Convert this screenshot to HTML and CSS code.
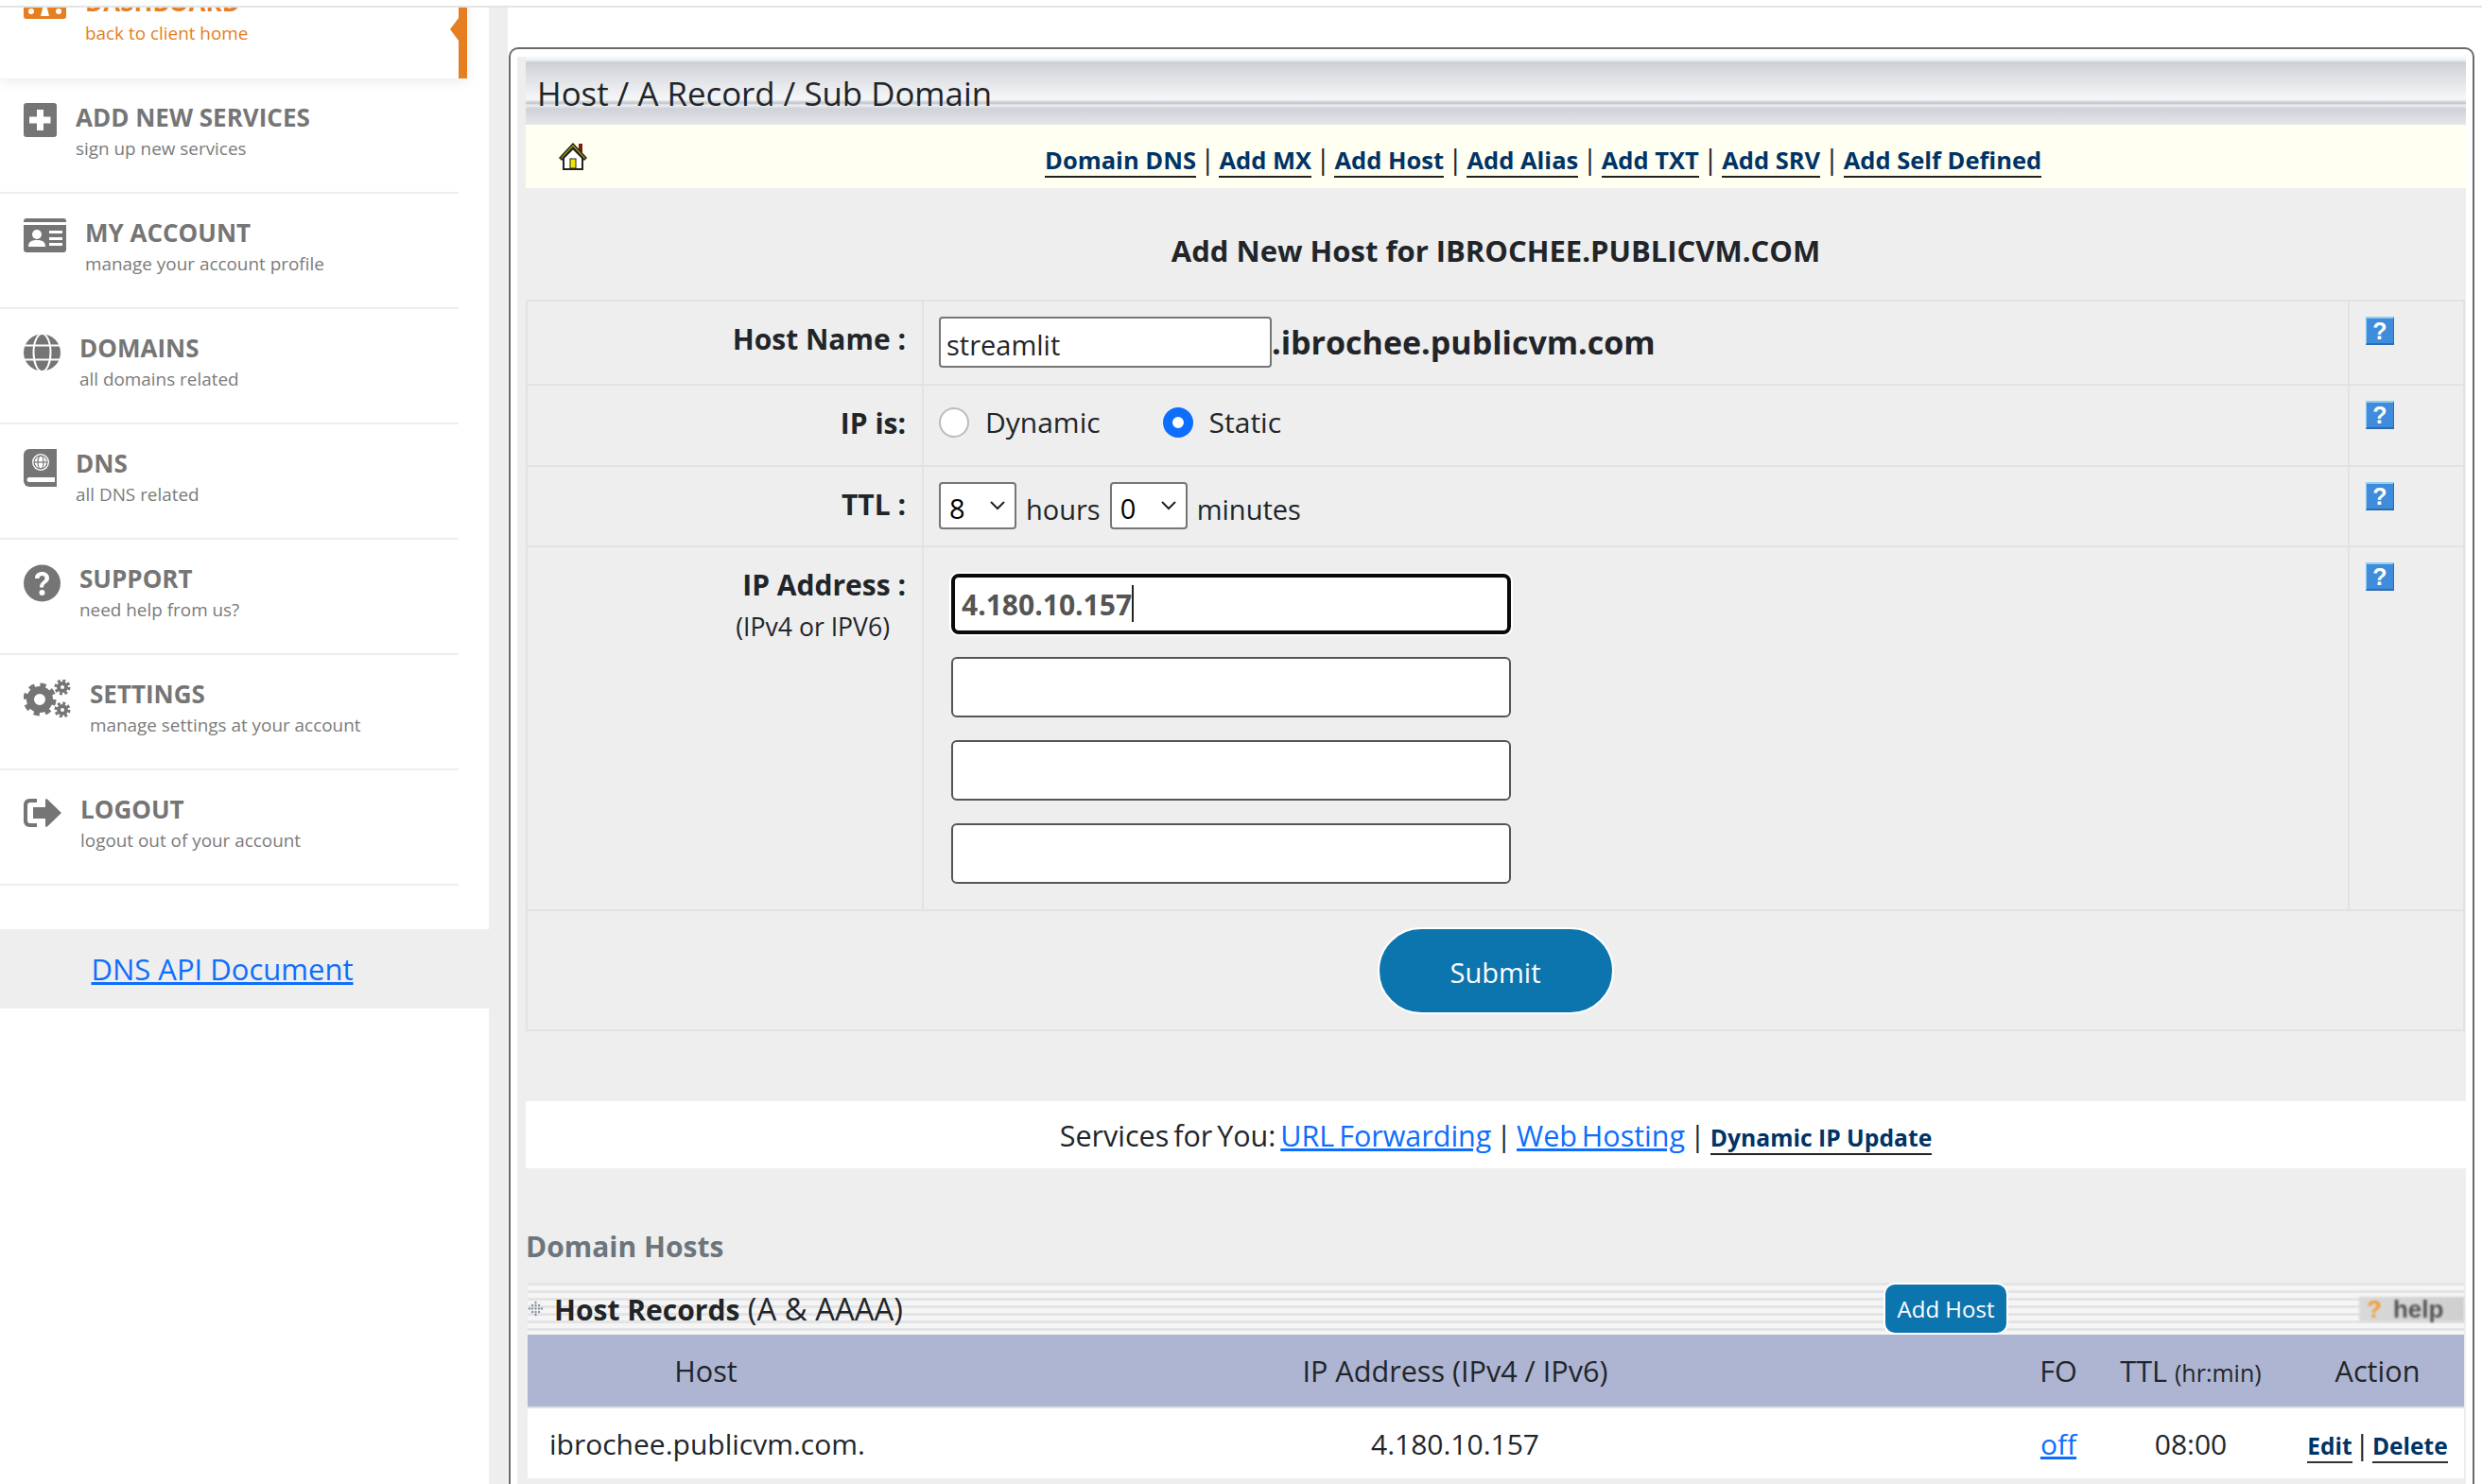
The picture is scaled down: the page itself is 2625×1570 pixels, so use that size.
FILE: index.html
```html
<!DOCTYPE html>
<html lang="en">
<head>
    <meta charset="UTF-8" />
    <meta name="viewport" content="width=device-width, initial-scale=1.0" />
    <title>Host / A Record / Sub Domain</title>
    <link rel="stylesheet" href="styles.css">
</head>
<body>

<div class="topline"></div>

<div class="layout">
    <!-- Sidebar -->
    <aside class="sidebar">
        <a class="side-item active" href="#">
            <svg class="side-icon" width="45" height="36" viewBox="0 0 45 36"><path d="M6 0h33a6 6 0 0 1 6 6v24a3 3 0 0 1-3 3H3a3 3 0 0 1-3-3V6a6 6 0 0 1 6-6z" fill="#e67e22"/><circle cx="8" cy="25" r="3" fill="#fff"/><circle cx="37" cy="25" r="3" fill="#fff"/><path d="M18 30l3-12h3l3 12z" fill="#fff"/></svg>
            <span class="side-text"><b>DASHBOARD</b><small>back to client home</small></span>
            <i class="notch"></i>
        </a>
        <a class="side-item" href="#">
            <svg class="side-icon" width="35" height="36" viewBox="0 0 35 36"><rect width="35" height="36" rx="3" fill="#757575"/><path d="M14 7h7v7.500h7.500v7H21V29h-7v-7.500H6v-7h8z" fill="#fff"/></svg>
            <span class="side-text"><b>ADD NEW SERVICES</b><small>sign up new services</small></span>
        </a>
        <a class="side-item" href="#">
            <svg class="side-icon" width="45" height="36" viewBox="0 0 45 36"><path d="M3 0h39a3 3 0 0 1 3 3v1H0V3a3 3 0 0 1 3-3z" fill="#757575"/><path d="M0 7h45v26a3 3 0 0 1-3 3H3a3 3 0 0 1-3-3z" fill="#757575"/><circle cx="14" cy="17" r="5" fill="#fff"/><path d="M5 30c0-6 4-7 9-7s9 1 9 7z" fill="#fff"/><path d="M27 13h14v3H27zM27 20h14v3H27zM27 26h14v3H27z" fill="#fff"/></svg>
            <span class="side-text"><b>MY ACCOUNT</b><small>manage your account profile</small></span>
        </a>
        <a class="side-item" href="#">
            <svg class="side-icon" width="39" height="40" viewBox="0 0 39 40"><circle cx="19.500" cy="20" r="19.500" fill="#757575"/><ellipse cx="19.500" cy="20" rx="9" ry="20" fill="none" stroke="#fff" stroke-width="2"/><path d="M0 12.500h39M0 27.500h39" stroke="#fff" stroke-width="2"/></svg>
            <span class="side-text"><b>DOMAINS</b><small>all domains related</small></span>
        </a>
        <a class="side-item" href="#">
            <svg class="side-icon" width="35" height="40" viewBox="0 0 35 40"><path d="M6 0h29v40H6a6 6 0 0 1-6-6V6a6 6 0 0 1 6-6z" fill="#757575"/><path d="M6 30h27v5H6a2.500 2.500 0 0 1 0-5z" fill="#fff"/><circle cx="18" cy="14" r="9" fill="#fff"/><circle cx="18" cy="14" r="7" fill="none" stroke="#757575" stroke-width="1.200"/><ellipse cx="18" cy="14" rx="3" ry="7" fill="none" stroke="#757575" stroke-width="1.200"/><path d="M11 14h14" stroke="#757575" stroke-width="1.200"/></svg>
            <span class="side-text"><b>DNS</b><small>all DNS related</small></span>
        </a>
        <a class="side-item" href="#">
            <svg class="side-icon" width="39" height="40" viewBox="0 0 39 40"><circle cx="19.500" cy="20" r="19.500" fill="#757575"/><path d="M12 15c0-5 3.500-7 7.500-7s7.500 2.500 7.500 6.500c0 5.500-6 5-6 10h-4c0-6.500 5.500-6.500 5.500-10 0-3.500-6-3.500-6 .5z" fill="#fff"/><circle cx="19.500" cy="30" r="3" fill="#fff"/></svg>
            <span class="side-text"><b>SUPPORT</b><small>need help from us?</small></span>
        </a>
        <a class="side-item" href="#">
            <svg class="side-icon" width="50" height="40" viewBox="0 0 50 40"><circle cx="17" cy="21" r="10" fill="none" stroke="#757575" stroke-width="8"/><circle cx="17" cy="21" r="15" fill="none" stroke="#757575" stroke-width="5" stroke-dasharray="6 5.780"/><circle cx="41" cy="8" r="4" fill="none" stroke="#757575" stroke-width="4"/><circle cx="41" cy="8" r="7" fill="none" stroke="#757575" stroke-width="3" stroke-dasharray="3 2.500"/><circle cx="41" cy="32" r="4" fill="none" stroke="#757575" stroke-width="4"/><circle cx="41" cy="32" r="7" fill="none" stroke="#757575" stroke-width="3" stroke-dasharray="3 2.500"/></svg>
            <span class="side-text"><b>SETTINGS</b><small>manage settings at your account</small></span>
        </a>
        <a class="side-item logout" href="#">
            <svg class="side-icon" width="40" height="30" viewBox="0 0 40 30"><path d="M14 0H6a6 6 0 0 0-6 6v18a6 6 0 0 0 6 6h8v-4H7a3 3 0 0 1-3-3V7a3 3 0 0 1 3-3h7z" fill="#757575"/><path d="M10 9h13V1c0-1 1-1 2-.5L40 15 25 29.500c-1 .5-2 .5-2-.5v-8H10z" fill="#757575"/></svg>
            <span class="side-text"><b>LOGOUT</b><small>logout out of your account</small></span>
        </a>
        <div class="api-doc"><a href="#">DNS API Document</a></div>
    </aside>

    <div class="gutter"></div>

    <!-- Main panel -->
    <main class="content">
        <div class="panel">
            <div class="panel-body">
                <div class="title-bar">Host / A Record / Sub Domain</div>

                <nav class="sub-nav">
                    <svg class="home-icon" width="30" height="30" viewBox="0 0 30 30"><path d="M21 2h4v10l-4-4z" fill="#7a1f10"/><path d="M15 2L1 17l2 2L15 6l12 13 2-2z" fill="#a8a800" stroke="#222" stroke-width="1.500"/><path d="M5 17v12h20V17L15 7z" fill="#fff" stroke="#222" stroke-width="2"/><rect x="12" y="18" width="6" height="10" fill="#f2e600" stroke="#222" stroke-width="1"/></svg>
                    <div class="sub-links">
                        <a href="#">Domain DNS</a><span class="pipe">|</span><a href="#">Add MX</a><span class="pipe">|</span><a href="#">Add Host</a><span class="pipe">|</span><a href="#">Add Alias</a><span class="pipe">|</span><a href="#">Add TXT</a><span class="pipe">|</span><a href="#">Add SRV</a><span class="pipe">|</span><a href="#">Add Self Defined</a>
                    </div>
                </nav>

                <h3 class="form-title">Add New Host for IBROCHEE.PUBLICVM.COM</h3>

                <form class="host-form" onsubmit="event.preventDefault();">
                    <div class="form-row row-name">
                        <div class="cell-label"><label for="host">Host Name :</label></div>
                        <div class="cell-value name-value">
                            <input class="text-input" type="text" id="host" value="streamlit" />
                            <strong class="suffix">.ibrochee.publicvm.com</strong>
                        </div>
                        <div class="cell-help"><span class="help-icon">?</span></div>
                    </div>

                    <div class="form-row row-ip">
                        <div class="cell-label"><label>IP is:</label></div>
                        <div class="cell-value radio-value">
                            <label class="radio"><input type="radio" name="iptype" value="dynamic" /> Dynamic</label>
                            <label class="radio"><input type="radio" name="iptype" value="static" checked /> Static</label>
                        </div>
                        <div class="cell-help"><span class="help-icon">?</span></div>
                    </div>

                    <div class="form-row row-ttl">
                        <div class="cell-label"><label>TTL :</label></div>
                        <div class="cell-value ttl-value">
                            <select><option>8</option></select>
                            <span>hours</span>
                            <select><option>0</option></select>
                            <span>minutes</span>
                        </div>
                        <div class="cell-help"><span class="help-icon">?</span></div>
                    </div>

                    <div class="form-row row-addr">
                        <div class="cell-label">
                            <label for="ip1">IP Address :</label>
                            <p class="label-note">(IPv4 or IPV6)</p>
                        </div>
                        <div class="cell-value addr-value">
                            <div class="focus-wrap">
                                <input class="ip-input focused" type="text" id="ip1" value="4.180.10.157" />
                                <i class="caret"></i>
                            </div>
                            <input class="ip-input" type="text" />
                            <input class="ip-input" type="text" />
                            <input class="ip-input" type="text" />
                        </div>
                        <div class="cell-help"><span class="help-icon">?</span></div>
                    </div>

                    <div class="submit-row">
                        <button class="btn-submit" type="submit">Submit</button>
                    </div>
                </form>

                <div class="services">
                    Services for You: <a href="#">URL Forwarding</a> | <a href="#">Web Hosting</a> | <a class="strong-link" href="#">Dynamic IP Update</a>
                </div>

                <h4 class="hosts-title">Domain Hosts</h4>

                <div class="records-bar">
                    <svg class="dots" width="17" height="17" viewBox="0 0 17 17"><g fill="#8a93a6"><circle cx="8.500" cy="2" r="1.200"/><circle cx="5" cy="5" r="1.200"/><circle cx="8.500" cy="5" r="1.200"/><circle cx="12" cy="5" r="1.200"/><circle cx="2" cy="8.500" r="1.200"/><circle cx="5" cy="8.500" r="1.200"/><circle cx="8.500" cy="8.500" r="1.200"/><circle cx="12" cy="8.500" r="1.200"/><circle cx="15" cy="8.500" r="1.200"/><circle cx="5" cy="12" r="1.200"/><circle cx="8.500" cy="12" r="1.200"/><circle cx="12" cy="12" r="1.200"/><circle cx="8.500" cy="15" r="1.200"/></g></svg>
                    <span class="records-name"><b>Host Records</b> (A &amp; AAAA)</span>
                    <a class="btn-add" href="#">Add Host</a>
                    <span class="help-badge"><em>?</em>help</span>
                </div>

                <table class="records">
                    <colgroup>
                        <col class="col-host"><col class="col-addr"><col class="col-fo"><col class="col-ttl"><col class="col-action">
                    </colgroup>
                    <thead>
                        <tr>
                            <th>Host</th>
                            <th>IP Address (IPv4 / IPv6)</th>
                            <th>FO</th>
                            <th>TTL <small>(hr:min)</small></th>
                            <th>Action</th>
                        </tr>
                    </thead>
                    <tbody>
                        <tr>
                            <td class="host-cell">ibrochee.publicvm.com.</td>
                            <td>4.180.10.157</td>
                            <td><a href="#">off</a></td>
                            <td>08:00</td>
                            <td class="action-cell"><a href="#">Edit</a> <span class="pipe">|</span> <a href="#">Delete</a></td>
                        </tr>
                    </tbody>
                </table>
            </div>
        </div>
    </main>
</div>

</body>
</html>
```
FILE: styles.css
```css
* {
    box-sizing: border-box;
}
body {
    margin: 0;
    height: 1570px;
    overflow: hidden;
    background: #fff;
    font-family: "Open Sans", "Noto Sans", Arial, sans-serif;
    color: #212529;
}
a {
    color: #0d6efd;
}
.topline {
    height: 8px;
    border-bottom: 2px solid #e4e4e4;
}
.layout {
    display: flex;
    height: 1562px;
}

/* Sidebar */
.sidebar {
    width: 517px;
    flex: none;
    overflow: hidden;
}
.side-item {
    display: flex;
    gap: 20px;
    width: 485px;
    height: 122px;
    padding: 26px 0 0 25px;
    border-bottom: 2px solid #eee;
    text-decoration: none;
    color: #757575;
}
.side-icon {
    flex: none;
}
.side-text {
    display: block;
}
.side-text b {
    display: block;
    margin-top: -1px;
    font-size: 26px;
    line-height: 33px;
    font-weight: 700;
    white-space: nowrap;
}
.side-text small {
    display: block;
    margin-top: 2px;
    font-size: 18.900px;
    line-height: 28px;
    color: #7b7b7b;
    white-space: nowrap;
}
.side-item.active {
    position: relative;
    width: 494px;
    height: 122px;
    margin-top: -47px;
    border-bottom: none;
    border-right: 9px solid #e67e22;
    box-shadow: 0 4px 12px rgba(0,0,0,0.08);
    color: #e67e22;
}
.side-item.active small {
    color: #e67e22;
}
.notch {
    position: absolute;
    right: 0;
    top: 58px;
    border-top: 12px solid transparent;
    border-bottom: 12px solid transparent;
    border-right: 9px solid #e67e22;
}
.side-item.logout {
    padding-top: 30px;
}
.side-item.logout .side-text {
    margin-top: -4px;
}
.api-doc {
    margin-top: 46px;
    height: 84px;
    padding-right: 47px;
    background: #eee;
    display: flex;
    align-items: center;
    justify-content: center;
    font-size: 31px;
}
.gutter {
    width: 20px;
    flex: none;
    background: #eee;
}

/* Panel */
.content {
    flex: 1;
    padding: 42px 8px 0 1px;
}
.panel {
    height: 1600px;
    border: 2px solid #6a6a6a;
    border-bottom: none;
    border-radius: 10px 10px 0 0;
    padding: 8px 7px 0 7px;
}
.panel-body {
    height: 100%;
    padding-left: 9px;
    background: #eee;
}
.title-bar {
    height: 72px;
    padding: 3px 0 0 12px;
    font-size: 34.800px;
    line-height: 72px;
    white-space: nowrap;
    background: linear-gradient(180deg, #f3f6f9 0, #f3f6f9 3px, #cdd0d6 6px, #f5f6f8 44px, #f2f3f5 46px, #c8ccd2 48px, #c8ccd2 50px, #f0f1f3 51px, #cfd2d8 55px, #e5e7ea 100%);
}
.sub-nav {
    display: flex;
    align-items: flex-start;
    height: 67px;
    padding: 18px 0 0 35px;
    background: #fffff2;
}
.sub-links {
    margin-left: 484px;
    font-size: 25.500px;
    line-height: 36px;
    white-space: nowrap;
    color: #222;
}
.pipe {
    margin: 0 4px;
    font-size: 30px;
    font-weight: 400;
    color: #222;
}
.sub-links a {
    display: inline-block;
    line-height: 34px;
    font-weight: 700;
    color: #003366;
    text-decoration: none;
    border-bottom: 2px solid #222;
}
.form-title {
    height: 118px;
    margin: 0;
    padding-top: 50px;
    font-size: 31px;
    line-height: 32px;
    font-weight: 700;
    text-align: center;
}

/* Form table */
.host-form {
    border-top: 2px solid #e0e3e6;
    border-right: 2px solid #e0e3e6;
    border-left: 2px solid #e0e3e6;
    margin-right: 1px;
}
.form-row {
    display: grid;
    grid-template-columns: 417px 1fr 120px;
    border-bottom: 2px solid #e0e3e6;
}
.row-name { height: 89px; }
.row-ip { height: 86px; }
.row-ttl { height: 85px; }
.row-addr { height: 385px; }
.cell-label {
    padding: 20px 17px 0 0;
    text-align: right;
    font-size: 30px;
    line-height: 40px;
    font-weight: 700;
}
.cell-value {
    border-left: 2px solid #e0e3e6;
    border-right: 2px solid #e0e3e6;
    padding-left: 16px;
    font-size: 29px;
}
.cell-help {
    padding: 16px 0 0 17px;
}
.help-icon {
    display: block;
    width: 30px;
    height: 30px;
    background: #3f8bdc;
    border-top: 2px solid #8fd0f0;
    border-left: 1px solid #8fd0f0;
    border-bottom: 2px solid #2c6cb0;
    border-right: 1px solid #2c6cb0;
    color: #fff;
    font-family: "Liberation Sans", Arial, sans-serif;
    font-size: 25px;
    font-weight: 700;
    line-height: 26px;
    text-align: center;
}
.name-value {
    display: flex;
    padding-top: 16px;
}
.text-input {
    width: 352px;
    height: 54px;
    padding: 4px 6px 0 6px;
    background: #fff;
    border: 2px solid #767676;
    border-radius: 4px;
    font: inherit;
    color: #212529;
}
.suffix {
    font-size: 34px;
    line-height: 54px;
    font-weight: 700;
    white-space: nowrap;
}
.radio-value {
    display: flex;
    align-items: flex-start;
    gap: 66px;
    padding-top: 19px;
    font-size: 30px;
    line-height: 40px;
}
.radio {
    display: flex;
    align-items: center;
    gap: 17px;
}
.radio input {
    appearance: none;
    width: 32px;
    height: 32px;
    margin: 0;
    background: #fff;
    border: 2px solid #bbb;
    border-radius: 50%;
}
.radio input:checked {
    border: 10px solid #0d6efd;
}
.ttl-value {
    display: flex;
    gap: 10px;
    padding-top: 16px;
}
.ttl-value span {
    line-height: 58px;
}
.ttl-value select {
    appearance: none;
    width: 82px;
    height: 50px;
    padding: 4px 0 0 9px;
    background: #fff url("data:image/svg+xml,%3Csvg xmlns='http://www.w3.org/2000/svg' width='18' height='12' viewBox='0 0 18 12'%3E%3Cpath d='M2 2l7 7 7-7' fill='none' stroke='%23222' stroke-width='2'/%3E%3C/svg%3E") no-repeat right 9px top 17px;
    border: 2px solid #767676;
    border-radius: 4px;
    font: inherit;
    color: #000;
}
.label-note {
    margin: 4px 17px 0 0;
    font-size: 26.600px;
    font-weight: 400;
}
.addr-value {
    display: flex;
    flex-direction: column;
    gap: 24px;
    padding: 28px 0 0 29px;
}
.focus-wrap {
    position: relative;
    width: 592px;
}
.ip-input {
    display: block;
    width: 592px;
    height: 64px;
    padding: 0 10px;
    background: #fff;
    border: 2px solid #555;
    border-radius: 6px;
    font: inherit;
}
.ip-input.focused {
    padding: 0 7px;
    border: 4px solid #0a0a0a;
    border-radius: 8px;
    box-shadow: 0 0 0 2px #fff;
    font-size: 30px;
    font-weight: 700;
    color: #555;
}
.caret {
    position: absolute;
    left: 191px;
    top: 12px;
    width: 2px;
    height: 39px;
    background: #222;
}
.submit-row {
    display: flex;
    align-items: center;
    justify-content: center;
    height: 127px;
    border-bottom: 2px solid #e0e3e6;
}
.btn-submit {
    width: 250px;
    height: 92px;
    padding-top: 4px;
    background: #0d75ae;
    border: 2px solid #fff;
    border-radius: 46px;
    font: inherit;
    font-size: 29px;
    color: #fff;
}

/* Below the form */
.services {
    height: 71px;
    margin-top: 74px;
    background: #fff;
    font-size: 30.500px;
    word-spacing: -3px;
    line-height: 73px;
    text-align: center;
    white-space: nowrap;
}
.strong-link {
    font-size: 24.700px;
    font-weight: 700;
    word-spacing: 0;
    color: #003366;
    text-decoration: none;
    border-bottom: 2px solid #222;
}
.hosts-title {
    margin: 0;
    height: 121px;
    padding-top: 64px;
    font-size: 30px;
    line-height: 38px;
    font-weight: 700;
    color: #6c757d;
}
.records-bar {
    display: flex;
    align-items: center;
    height: 55px;
    margin: 0 2px;
    background: repeating-linear-gradient(180deg, #e4e4e4 0, #e4e4e4 3px, #f5f5f5 3px, #f5f5f5 8px);
}
.dots {
    margin-right: 11px;
    flex: none;
}
.records-name {
    width: 1406px;
    font-size: 32.800px;
    white-space: nowrap;
}
.records-name b {
    font-size: 30px;
    font-weight: 700;
}
.btn-add {
    width: 132px;
    height: 55px;
    background: #0d75ae;
    border: 2px solid #fff;
    border-radius: 12px;
    color: #fff;
    font-size: 24px;
    line-height: 51px;
    text-align: center;
    text-decoration: none;
    white-space: nowrap;
}
.help-badge {
    width: 111px;
    height: 26px;
    margin-left: 371px;
    padding-left: 8px;
    background: linear-gradient(90deg, #d9d9d9, #cfcfcf);
    color: #555;
    font-family: "Liberation Sans", Arial, sans-serif;
    font-size: 26px;
    font-weight: 700;
    line-height: 26px;
    white-space: nowrap;
    filter: blur(0.8px);
}
.help-badge em {
    margin-right: 12px;
    font-style: normal;
    color: #f39c33;
}
.records {
    width: 2048px;
    margin-left: 2px;
    table-layout: fixed;
    border-collapse: collapse;
    font-size: 30px;
}
.col-host { width: 377px; }
.col-addr { width: 1208px; }
.col-fo { width: 68px; }
.col-ttl { width: 212px; }
.col-action { width: 183px; }
.records th {
    height: 77px;
    padding: 0;
    background: #aeb5d2;
    border-bottom: 2px solid #dde0ea;
    font-size: 30.600px;
    font-weight: 400;
    white-space: nowrap;
}
.records th small {
    font-size: 25px;
}
.records td {
    height: 75px;
    padding: 0;
    background: #fff;
    text-align: center;
    white-space: nowrap;
}
.records td.host-cell {
    padding-left: 23px;
    text-align: left;
}
.action-cell {
    font-size: 24.500px;
}
.action-cell .pipe {
    margin: 0 -4px;
}
.action-cell a {
    font-weight: 700;
    color: #003366;
    text-decoration: none;
    border-bottom: 2px solid #333;
}
```
